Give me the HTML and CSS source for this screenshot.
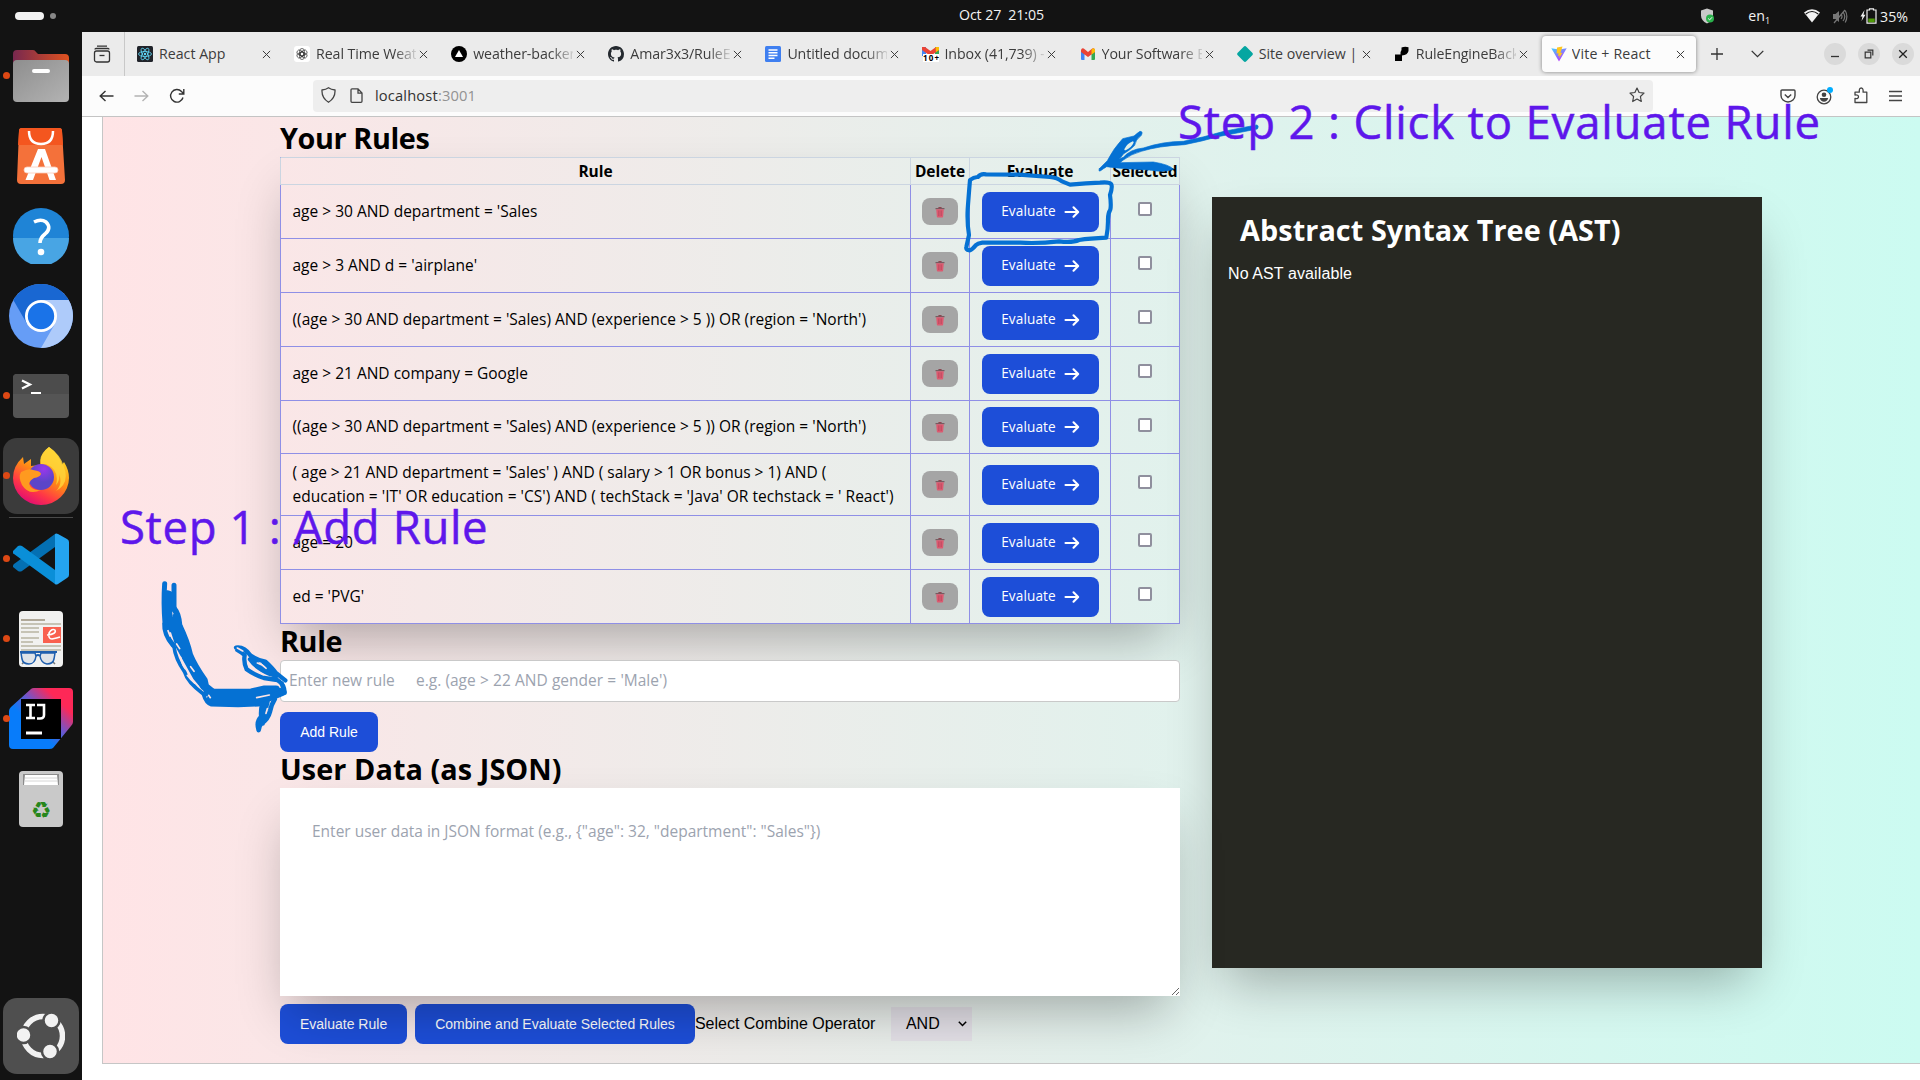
FILE: index.html
```html
<!DOCTYPE html>
<html lang="en">
<head>
<meta charset="utf-8">
<title>Vite + React</title>
<link rel="stylesheet" href="styles.css">
</head>
<body>
<svg class="defs" width="0" height="0">
  <symbol id="close" viewBox="0 0 10 10"><path d="M1 1l8 8M9 1l-8 8" stroke="#3c3c3c" stroke-width="1.1" fill="none"/></symbol>
  <symbol id="trash" viewBox="0 0 10 12"><path d="M.5 2.2h9v1h-9z" fill="#6b4a50"/><path d="M3.4 1h3.2v1.2H3.4z" fill="#8b4652"/><path d="M1.2 3.2h7.6l-.7 7.6q0 .7-.8.7H2.7q-.8 0-.8-.7z" fill="#dc5a70"/><path d="M3.5 4.5v5.5M5 4.5v5.5M6.500 4.500v5.500" stroke="#b5475c" stroke-width=".6"/></symbol>
  <symbol id="arrow" viewBox="0 0 16 14"><path d="M1.500 7h12.500M9.500 2.300L14.200 7 9.500 11.700" fill="none" stroke="#fff" stroke-width="2.100" stroke-linecap="round" stroke-linejoin="round"/></symbol>
</svg>

<header class="topbar">
  <div class="workspaces"><i class="pill"></i><i class="dot"></i></div>
  <div class="clock">Oct 27&nbsp; 21:05</div>
  <div class="tray">
    <svg class="t-shield" width="15" height="16" viewBox="0 0 15 16"><path d="M7 .5l6 2v5q0 5-6 8-6-3-6-8v-5z" fill="#c9c9c9"/><circle cx="10" cy="10.500" r="4" fill="#2bb24c"/><path d="M8.200 10.500l1.400 1.400 2.400-2.600" stroke="#fff" fill="none"/></svg>
    <span class="lang">en<sub>1</sub></span>
    <svg class="t-wifi" width="16" height="14" viewBox="0 0 16 14"><path d="M0 3.500Q8-3 16 3.500L8 13.500z" fill="#f2f2f2"/><path d="M1.800 5Q8 0 14.200 5" stroke="#131313" fill="none" stroke-width="1.200"/></svg>
    <svg class="t-mute" width="16" height="15" viewBox="0 0 16 15"><path d="M1 5h2.500L7 2v11L3.500 10H1z" fill="#777"/><path d="M9 5q2 2.500 0 5M11 3q3.500 4.500 0 9M13.200 1.500q3.300 6 0 12M2 14L13 1" stroke="#777" fill="none" stroke-width="1.200"/></svg>
    <svg class="t-bat" width="17" height="16" viewBox="0 0 17 16"><path d="M4.500 2L.5 8.500h2L1.500 13l4-6.300h-2z" fill="#f2f2f2"/><path d="M9.500 2V.8h4V2H16v13.200H7V2z" fill="none" stroke="#f2f2f2" stroke-width="1.200"/><path d="M8.300 10.500h6.400v3.700H8.300z" fill="#4e9a06"/></svg>
    <span class="pct">35%</span>
  </div>
</header>

<div class="desktop">
<nav class="dock">
  <div class="slot run"><svg width="56" height="54" viewBox="0 0 56 54"><defs><linearGradient id="fo"><stop offset="0" stop-color="#77284f"/><stop offset="1" stop-color="#e0521f"/></linearGradient><linearGradient id="fg" x2="1" y2="1"><stop offset="0" stop-color="#8e8e8e"/><stop offset="1" stop-color="#b3b3b3"/></linearGradient></defs><path d="M0 5q0-4 4-4h16q2 0 3 2l2 2h27q4 0 4 4v18H0z" fill="url(#fo)"/><rect y="11" width="56" height="42" rx="4" fill="url(#fg)"/><rect x="19" y="20" width="18" height="4" rx="2" fill="#fff"/></svg></div>
  <div class="slot"><svg width="50" height="58" viewBox="0 0 50 58"><path d="M6 1h37q3 0 3 3l3 49q0 4-4 4H5q-4 0-4-4L3 4q0-3 3-3z" fill="#f4713a"/><path d="M6 1h37q3 0 3 3l1 14H2L3 4q0-3 3-3z" fill="#f4561f"/><path d="M13 4q0 13 12 13T37 4" fill="none" stroke="#fff" stroke-width="2.500"/><path d="M22 22h7l11 31h-6.500l-8-23-8.500 23h-7.500z" fill="#fff"/><rect x="8" y="40" width="34" height="6" rx="3" fill="#fff" stroke="#fbcab8" stroke-width=".8"/></svg></div>
  <div class="slot"><svg width="56" height="56" viewBox="0 0 56 56"><circle cx="28" cy="28" r="28" fill="#1f84d6"/><path d="M0 30a28 28 0 0 0 56 0z" fill="#48a5e4"/><path d="M21 14q7-3.500 12 0 6 6-1 12-5 4-5 9" fill="none" stroke="#fff" stroke-width="3.600"/><circle cx="28" cy="44" r="3.300" fill="#fff"/></svg></div>
  <div class="slot"><svg width="64" height="64" viewBox="0 0 64 64"><circle cx="32" cy="32" r="32" fill="#669df6"/><path d="M4.300 16A32 32 0 0 1 59.700 16H32L18.100 40z" fill="#1967d2"/><path d="M59.700 16A32 32 0 0 1 32 64L45.900 40 32 16z" fill="#aecbfa"/><circle cx="32" cy="32" r="16" fill="#fff"/><circle cx="32" cy="32" r="13.200" fill="#1a73e8"/></svg></div>
  <div class="slot run"><svg width="56" height="44" viewBox="0 0 56 44"><rect width="56" height="44" rx="4" fill="#555"/><path d="M4 0h48q4 0 4 4v16H0V4q0-4 4-4z" fill="#4c4c4c"/><path d="M9 6.500l8 4-8 4" fill="none" stroke="#fff" stroke-width="2.200"/><path d="M18 19h10" stroke="#fff" stroke-width="2"/></svg></div>
  <div class="slot run active"><svg width="56" height="58" viewBox="0 0 56 58"><defs><linearGradient id="ff" x1=".8" y1=".1" x2=".3" y2="1"><stop offset="0" stop-color="#ffe226"/><stop offset=".45" stop-color="#ff8a16"/><stop offset=".75" stop-color="#ff3647"/><stop offset="1" stop-color="#e00b75"/></linearGradient><radialGradient id="fp" cx=".6" cy=".2"><stop offset="0" stop-color="#9a37ec"/><stop offset="1" stop-color="#5b45c8"/></radialGradient></defs><path d="M36 0q10 7 13 18l2-3q5 8 5 16a28 27 0 0 1-56 0q0-12 10-21l1 7 7-5v7q4-1 9 0 0-13 9-19z" fill="url(#ff)"/><circle cx="28" cy="30" r="13" fill="url(#fp)"/><path d="M8 25q8-4 12-2 8 1 8 4-1 3-7 4-4 2-5 6 3 7 12 6-12 6-19-5-4-8-1-13z" fill="#ff9a1f"/><path d="M33 17q14 6 10 21 4-4 3-11 4 10-3 17 14-8 8-24Q48 8 36 0q-11 8-8 17z" fill="#ffd43a" opacity=".85"/></svg></div>
  <hr class="dock-sep">
  <div class="slot run"><svg width="56" height="52" viewBox="0 0 56 52"><path d="M0 34l5 4q2 1 4 0L42 14V1L1 31q-2 2-1 3z" fill="#0470b3"/><path d="M0 18l5-5q2-1 4 0l33 24v14L1 21q-2-1-1-3z" fill="#0a8fd8"/><path d="M42 1q1-1 3 0l9 5q2 1 2 3v33q0 2-2 3l-9 6q-2 1-3 0z" fill="#24a4f0"/></svg></div>
  <div class="slot run"><svg width="44" height="56" viewBox="0 0 44 56"><rect width="44" height="56" rx="4" fill="#f1f1f0"/><path d="M2 9h24" stroke="#b0a898" stroke-width="2"/><path d="M2 13h40M2 17h18M2 21h18M2 27h18M2 31h12M2 35h40M2 39h40" stroke="#c6c3b5" stroke-width="2"/><rect x="24" y="16" width="18" height="16" fill="#f9604f"/><path d="M28 24q10-1 8-5-3-2-6 3-1 6 3 6 5-1 8-2" fill="none" stroke="#fff" stroke-width="1.500"/><path d="M3 53l11-11M36 53L25 42" stroke="#777" stroke-width="1.500"/><path d="M2 42h14l1 3q-1 8-7 8-6 0-7-5zM22 42h14l-1 6q-1 5-7 5-6-1-7-8z" fill="#dfe3e8" stroke="#1f5fae" stroke-width="1.500"/><path d="M1 41h37M17 45q2-2 4 0" fill="none" stroke="#1f5fae" stroke-width="1.800"/></svg></div>
  <div class="slot run"><svg width="64" height="64" viewBox="0 0 64 64"><defs><linearGradient id="ij" x1=".15" y1=".85" x2=".9" y2=".1"><stop offset=".3" stop-color="#087cfa"/><stop offset=".55" stop-color="#6b57ce"/><stop offset=".85" stop-color="#fe2857"/></linearGradient></defs><path d="M22 2q1-1 3-1h35q4 0 4 4v30q0 2-2 4L44 61q-1 1-4 1H4q-4 0-4-4V24q0-2 2-4z" fill="url(#ij)"/><rect x="12" y="12" width="40" height="40" fill="#000"/><path d="M17 18h9M21.500 18v13M17 31h9M28 18h7v10q0 3.500-4 3.500h-3" fill="none" stroke="#fff" stroke-width="2.600"/><path d="M17 46h16" stroke="#fff" stroke-width="3"/></svg></div>
  <div class="slot"><svg width="44" height="56" viewBox="0 0 44 56"><rect width="44" height="56" rx="4" fill="#c9c9c9"/><path d="M4 3h36v11H4z" fill="#8c8c8c"/><path d="M6 4h32l1 10H5z" fill="#fff"/><path d="M6 7h32M6 10h33" stroke="#ccc" stroke-width=".8"/></svg><span class="recycle">♻</span></div>
  <div class="slot launcher"><svg width="48" height="46" viewBox="0 0 48 46"><circle cx="26" cy="23" r="19.500" fill="none" stroke="#f2f2f2" stroke-width="5.500"/><g fill="#f2f2f2" stroke="#4f4f4f" stroke-width="2.500"><circle cx="6.500" cy="22" r="8"/><circle cx="34.500" cy="7.500" r="8"/><circle cx="33" cy="38.500" r="8"/></g></svg></div>
</nav>

<main class="window">
  <div class="tabstrip">
    <div class="tabview"><svg width="18" height="18" viewBox="0 0 18 18" fill="none" stroke="#333" stroke-width="1.300"><path d="M4 1.200h10M2 4.500q0-1 1-1h12q1 0 1 1"/><rect x="1.500" y="6" width="15" height="11" rx="2"/><path d="M6.500 10.500h5"/></svg></div>
    <div class="tabs">
      <div class="tab"><svg width="16" height="16" viewBox="0 0 16 16"><rect width="16" height="16" rx="1.500" fill="#20232a"/><g fill="none" stroke="#61dafb" stroke-width=".8"><ellipse cx="8" cy="8" rx="6.500" ry="2.500"/><ellipse cx="8" cy="8" rx="6.500" ry="2.500" transform="rotate(60 8 8)"/><ellipse cx="8" cy="8" rx="6.500" ry="2.500" transform="rotate(120 8 8)"/></g><circle cx="8" cy="8" r="1.200" fill="#61dafb"/></svg><span class="label">React App</span><svg class="x"><use href="#close"/></svg></div>
      <div class="tab"><svg width="16" height="16" viewBox="0 0 16 16"><rect width="16" height="16" rx="3" fill="#fff"/><g fill="none" stroke="#333" stroke-width=".7"><rect x="5.700" y="2.500" width="4.600" height="7.500" rx="2.300"/><rect x="5.700" y="2.500" width="4.600" height="7.500" rx="2.300" transform="rotate(60 8 8)"/><rect x="5.700" y="2.500" width="4.600" height="7.500" rx="2.300" transform="rotate(120 8 8)"/><rect x="5.700" y="2.500" width="4.600" height="7.500" rx="2.300" transform="rotate(180 8 8)"/><rect x="5.700" y="2.500" width="4.600" height="7.500" rx="2.300" transform="rotate(240 8 8)"/><rect x="5.700" y="2.500" width="4.600" height="7.500" rx="2.300" transform="rotate(300 8 8)"/></g></svg><span class="label fade">Real Time Weat</span><svg class="x"><use href="#close"/></svg></div>
      <div class="tab"><svg width="16" height="16" viewBox="0 0 16 16"><circle cx="8" cy="8" r="8"/><path d="M8 4l4 7H4z" fill="#fff"/></svg><span class="label fade">weather-backen</span><svg class="x"><use href="#close"/></svg></div>
      <div class="tab"><svg width="16" height="16" viewBox="0 0 16 16"><path fill="#24292f" d="M8 0C3.580 0 0 3.580 0 8c0 3.540 2.290 6.530 5.470 7.590.4.070.55-.17.55-.38 0-.19-.01-.82-.01-1.490-2.010.37-2.530-.49-2.690-.94-.09-.23-.48-.94-.82-1.130-.28-.15-.68-.52-.01-.53.63-.01 1.080.58 1.230.82.72 1.210 1.870.87 2.330.66.07-.52.28-.87.51-1.070-1.780-.2-3.640-.89-3.640-3.950 0-.87.31-1.590.82-2.150-.08-.2-.36-1.020.08-2.120 0 0 .67-.21 2.200.82.64-.18 1.320-.27 2-.27s1.360.09 2 .27c1.530-1.040 2.200-.82 2.200-.82.44 1.100.16 1.920.08 2.120.51.56.82 1.270.82 2.150 0 3.070-1.870 3.750-3.650 3.950.29.25.54.73.54 1.480 0 1.070-.01 1.930-.01 2.200 0 .21.15.46.55.38A8.010 8.010 0 0 0 16 8c0-4.420-3.580-8-8-8z"/></svg><span class="label fade">Amar3x3/RuleE</span><svg class="x"><use href="#close"/></svg></div>
      <div class="tab"><svg width="16" height="16" viewBox="0 0 16 16"><rect width="16" height="16" rx="1.500" fill="#3f7ff0"/><path d="M3.500 4h9M3.500 6.800h9M3.500 9.500h9M3.500 12.200h6" stroke="#fff" stroke-width="1.400"/></svg><span class="label fade">Untitled docum</span><svg class="x"><use href="#close"/></svg></div>
      <div class="tab"><svg width="17" height="16" viewBox="0 0 17 16"><path d="M0 1h4v9H0z" fill="#4285f4"/><path d="M13 1h4v9h-4z" fill="#34a853"/><path d="M0 1h3l5.500 4L14 1h3v3L8.500 10 0 4z" fill="#ea4335"/><path d="M13.500 1H17v3l-3 2z" fill="#fbbc04"/><rect x="1" y="8" width="16" height="8" fill="#fff"/><text x="1" y="15.200" font-family="Open Sans,sans-serif" font-size="8" font-weight="700" textLength="16">10+</text></svg><span class="label fade inbox">Inbox (41,739) -</span><svg class="x"><use href="#close"/></svg></div>
      <div class="tab"><svg width="16" height="16" viewBox="0 0 16 16"><path d="M1 4h3.500v10H2q-1 0-1-1z" fill="#4285f4"/><path d="M11.500 4H15v9q0 1-1 1h-2.500z" fill="#34a853"/><path d="M1 4q1-3 4-.5L8 6l3-2.500Q14 1 15 4v2L8 11 1 6z" fill="#ea4335"/><path d="M11.500 3.500Q14.500 1 15 4v2l-3.500 2.600z" fill="#fbbc04"/></svg><span class="label fade">Your Software E</span><svg class="x"><use href="#close"/></svg></div>
      <div class="tab"><svg width="16" height="16" viewBox="0 0 16 16"><path d="M8 0q.7 0 1.300.7l6.200 6.300q.7 1 0 2l-6.200 6.300Q8 16.500 6.700 15.300L.5 9q-.7-1 0-2L6.700.7Q7.300 0 8 0z" fill="#05a6a1"/></svg><span class="label">Site overview |</span><svg class="x"><use href="#close"/></svg></div>
      <div class="tab"><svg width="16" height="16" viewBox="0 0 16 16"><path d="M1 8.500h5.500Q6 6 7.500 4V1.500Q11 0 14.500 1.200V5q-1 4-6.500 4.500V15H1z"/></svg><span class="label fade">RuleEngineBack</span><svg class="x"><use href="#close"/></svg></div>
      <div class="tab current"><svg width="16" height="16" viewBox="0 0 16 16"><defs><linearGradient id="vt" x2=".6" y2="1"><stop offset="0" stop-color="#41d1ff"/><stop offset="1" stop-color="#bd34fe"/></linearGradient></defs><path d="M.3 2.200L8 15.600 15.700 2.200 8 3.600z" fill="url(#vt)"/><path d="M11.500.5L6 1.600l-.4 6 2-.4-.6 2.800 1.800-.6-.8 3 3.400-5.600-2 .3z" fill="#ffc61e"/></svg><span class="label">Vite + React</span><svg class="x"><use href="#close"/></svg></div>
    </div>
    <div class="tabtools">
      <svg width="12" height="12" viewBox="0 0 12 12"><path d="M6 0v12M0 6h12" stroke="#333" stroke-width="1.300"/></svg>
      <svg class="all" width="13" height="8" viewBox="0 0 13 8"><path d="M.7.9l5.800 5.800L12.300.9" fill="none" stroke="#333" stroke-width="1.300"/></svg>
    </div>
    <div class="wm">
      <i><svg width="10" height="10" viewBox="0 0 10 10"><path d="M1 7.500h8" stroke="#333" stroke-width="1.300"/></svg></i>
      <i><svg width="10" height="10" viewBox="0 0 10 10" fill="none" stroke="#333" stroke-width="1.200"><path d="M1.200 3.200h5.600v5.600H1.200zM3.500 1.200h5.300v5.300"/></svg></i>
      <i><svg width="10" height="10" viewBox="0 0 10 10"><path d="M1.200 1.200l7.600 7.600M8.800 1.200L1.200 8.800" stroke="#222" stroke-width="1.300"/></svg></i>
    </div>
  </div>

  <div class="toolbar">
    <div class="nav">
      <svg width="15" height="12" viewBox="0 0 15 12"><path d="M14.500 6H1.500M6.500 1L1.200 6l5.300 5" fill="none" stroke="#333" stroke-width="1.400"/></svg>
      <svg width="15" height="12" viewBox="0 0 15 12"><path d="M.5 6h13M8.500 1l5.300 5-5.300 5" fill="none" stroke="#b3b3b3" stroke-width="1.400"/></svg>
      <svg width="16" height="16" viewBox="0 0 16 16"><path d="M14 9.500A6.300 6.300 0 1 1 12.500 3.500L14.500 5.500M14.800 1v5h-5" fill="none" stroke="#333" stroke-width="1.400"/></svg>
    </div>
    <div class="url">
      <svg width="15" height="16" viewBox="0 0 15 16"><path d="M7.500.8Q10 2.700 14 3q.5 8-6.500 12.200Q.5 11 1 3q4-.3 6.500-2.200z" fill="none" stroke="#444" stroke-width="1.300"/></svg>
      <svg width="13" height="15" viewBox="0 0 13 15"><path d="M8 .8H2q-1 0-1 1v11.500q0 1 1 1h9q1 0 1-1V5zv4.400h4" fill="none" stroke="#444" stroke-width="1.300"/></svg>
      <span class="addr">localhost<b>:3001</b></span>
      <svg class="star" width="16" height="16" viewBox="0 0 16 16"><path d="M8 1l2.100 4.500 4.900.6-3.600 3.400.9 5L8 12l-4.300 2.500.9-5L1 6.100l4.900-.6z" fill="none" stroke="#444" stroke-width="1.200" stroke-linejoin="round"/></svg>
    </div>
    <div class="ext">
      <svg width="16" height="16" viewBox="0 0 16 16" fill="none" stroke="#444" stroke-width="1.400"><path d="M1 3q0-1 1-1h12q1 0 1 1v4.500a7 6.500 0 0 1-14 0zM4.800 6.500L8 9.500l3.200-3"/></svg>
      <svg width="17" height="18" viewBox="0 0 17 18"><circle cx="8" cy="10" r="6.800" fill="none" stroke="#444" stroke-width="1.300"/><circle cx="8" cy="7.800" r="2.300" fill="#444"/><path d="M3.800 11h8.400q-1 3.800-4.200 3.800T3.800 11z" fill="#444"/><circle cx="14" cy="3" r="3" fill="#00adff"/></svg>
      <svg width="16" height="17" viewBox="0 0 16 17"><path d="M2 15.500v-4q3.500.5 3.500-1.700T2 8V5.200h4.300V3q.2-2 1.900-2t1.900 2v2.200h3.700v10.300z" fill="none" stroke="#444" stroke-width="1.300" stroke-linejoin="round"/></svg>
      <svg width="13" height="12" viewBox="0 0 13 12"><path d="M0 1.500h13M0 6h13M0 10.500h13" stroke="#444" stroke-width="1.300"/></svg>
    </div>
  </div>

  <div class="viewport">
    <div class="app">
      <section class="left">
        <h2>Your Rules</h2>
        <div class="rules">
          <div class="row head"><div>Rule</div><div>Delete</div><div>Evaluate</div><div>Selected</div></div>
          <div class="row"><div>age &gt; 30 AND department = 'Sales</div><div><button class="del"><svg><use href="#trash"/></svg></button></div><div><button class="ev">Evaluate<svg><use href="#arrow"/></svg></button></div><div><i class="cb"></i></div></div>
          <div class="row"><div>age &gt; 3 AND d = 'airplane'</div><div><button class="del"><svg><use href="#trash"/></svg></button></div><div><button class="ev">Evaluate<svg><use href="#arrow"/></svg></button></div><div><i class="cb"></i></div></div>
          <div class="row"><div>((age &gt; 30 AND department = 'Sales) AND (experience &gt; 5 )) OR (region = 'North')</div><div><button class="del"><svg><use href="#trash"/></svg></button></div><div><button class="ev">Evaluate<svg><use href="#arrow"/></svg></button></div><div><i class="cb"></i></div></div>
          <div class="row"><div>age &gt; 21 AND company = Google</div><div><button class="del"><svg><use href="#trash"/></svg></button></div><div><button class="ev">Evaluate<svg><use href="#arrow"/></svg></button></div><div><i class="cb"></i></div></div>
          <div class="row short"><div>((age &gt; 30 AND department = 'Sales) AND (experience &gt; 5 )) OR (region = 'North')</div><div><button class="del"><svg><use href="#trash"/></svg></button></div><div><button class="ev">Evaluate<svg><use href="#arrow"/></svg></button></div><div><i class="cb"></i></div></div>
          <div class="row tall"><div><span>( age &gt; 21 AND department = 'Sales' ) AND ( salary &gt; 1 OR bonus &gt; 1) AND (<br><span class="second">education = 'IT' OR education = 'CS') AND ( techStack = 'Java' OR techstack = ' React')</span></span></div><div><button class="del"><svg><use href="#trash"/></svg></button></div><div><button class="ev">Evaluate<svg><use href="#arrow"/></svg></button></div><div><i class="cb"></i></div></div>
          <div class="row"><div>age = 20</div><div><button class="del"><svg><use href="#trash"/></svg></button></div><div><button class="ev">Evaluate<svg><use href="#arrow"/></svg></button></div><div><i class="cb"></i></div></div>
          <div class="row"><div>ed = 'PVG'</div><div><button class="del"><svg><use href="#trash"/></svg></button></div><div><button class="ev">Evaluate<svg><use href="#arrow"/></svg></button></div><div><i class="cb"></i></div></div>
        </div>
        <h2>Rule</h2>
        <input class="rule-input" placeholder="Enter new rule     e.g. (age &gt; 22 AND gender = 'Male')">
        <button class="btn add">Add Rule</button>
        <h2 class="wide">User Data (as JSON)</h2>
        <textarea class="json" placeholder="Enter user data in JSON format (e.g., {&quot;age&quot;: 32, &quot;department&quot;: &quot;Sales&quot;})"></textarea>
        <div class="actions">
          <button class="btn">Evaluate Rule</button>
          <button class="btn">Combine and Evaluate Selected Rules</button>
          <label>Select Combine Operator</label>
          <div class="select">AND<svg width="9" height="6" viewBox="0 0 9 6"><path d="M.8.800l3.700 3.700L8.200.8" fill="none" stroke="#000" stroke-width="1.500"/></svg></div>
        </div>
      </section>
      <section class="ast">
        <h2 class="wide">Abstract Syntax Tree (AST)</h2>
        <p>No AST available</p>
      </section>
    </div>
  </div>
</main>
</div>

<div class="note step1">Step 1 : Add Rule</div>
<div class="note step2">Step 2 : Click to Evaluate Rule</div>
<svg class="ink" width="1920" height="1080" viewBox="0 0 1920 1080" fill="none" stroke="#0571d3" stroke-linecap="round" stroke-linejoin="round">
  <g transform="translate(150 570) scale(.33333)">
    <g stroke-width="13">
      <path d="M44 41q-4 56 1 118M72 46v70M58 70v110M44 160q-2 34 26 66" stroke-width="15"/>
      <path d="M52 70L60 150 98 240 160 350M72 116q14 16 16 50 24 50 32 88 14 34 44 76l4 18 30 24" stroke-width="18"/>
      <path d="M62 150l26 80 50 90 42 50M78 140l30 100 46 90" stroke-width="21"/>
      <path d="M46 170q2 30 26 60 4 36 32 76 8 30 56 66 8 28 24 32l80 2 62-2" stroke-width="11"/>
      <path d="M172 368h42l90-1 40-9h34M180 390l84 6 80-8 54-22M200 380l130 0 60-14" stroke-width="23"/>
      <path d="M258 233q24-4 44 24 22 14 44 18 20 18 30 32l30 24M262 240q16 10 22 16-4 20 6 42 18 14 52 26l40 6q22 14 22 38M312 272q24 28 60 44M300 268q18 26 60 44M340 276l40 42" stroke-width="13"/>
      <path d="M336 402q-4 26-2 38-16 14-8 40 2-14 8-20 20-12 26-36 4-20 14-36M346 400l-8 60M352 396l-10 40" stroke-width="14"/>
      <path d="M396 340l6 24-34 10" stroke-width="12"/>
    </g>
    <path stroke="#fbe4e5" stroke-width="5" d="M54 182l6 16M80 222l9 14M92 262q5 24 14 34M122 290l10 14M112 316q10 14 22 23M176 376l5 7M262 234l16 9M322 279q16 4 26 16M298 288q20 14 42 26M320 383l38-8M352 416l-4 14"/>
  </g>
  <g transform="translate(960 120) scale(.33333)">
    <path stroke-width="12.500" d="M30 180q12-10 24-9 8-11 24-8l100 1 92 7q22 2 36 13l24 10q50-4 90-6 28-3 34 5 4 8-4 32 4 30 1 44-8 12-7 34 0 24-5 50-50 2-82 7-20 9-60 4-60 7-116 4-60 0-114 0-14 2-20 8-12 15-20 15-10-2-8-10l8-36q-6-36-4-76 2-30 7-89z"/>
    <path fill="#0571d3" stroke-width="2" d="M418 146l24-24q18-36 46-66l34-8q12-10 18-14 10 0 4 12-18 14-20 30-10 12-34 26-8 14-20 18l20-8q20-24 60-28 60-20 120-20 60-12 122-30 60-12 98-19 8 2 2 12-60 12-118 23-48 14-100 24-80 4-130 20-30 8-54 26l-10 8 100-2q50 8 60 22-30 10-70 2-90-4-130-10-10 6-18 12-8 4-4-6z"/>
    <path stroke="#e0efea" stroke-width="6" d="M496 88q8-16 22-21-6 14-22 21z"/>
  </g>
</svg>
</body>
</html>
```
FILE: styles.css
```css
* { box-sizing: border-box; }
body { margin: 0; width: 1920px; height: 1080px; overflow: hidden; position: relative; display: flex; flex-direction: column; background: #fff; font-family: "Open Sans", "Noto Sans", sans-serif; font-size: 15.5px; color: #000; }
svg { display: block; flex: none; }
i { font-style: normal; }
.defs { position: absolute; }
h2 { margin: 0; font-size: 28.8px; font-weight: 700; line-height: 34px; height: 36px; letter-spacing: -.4px; white-space: nowrap; }
.wide { letter-spacing: .08px; }

.topbar { height: 32px; flex: none; background: #131313; color: #f2f2f2; font-size: 14.2px; display: grid; grid-template-columns: 1fr auto 1fr; align-items: center; }
.workspaces { display: flex; align-items: center; gap: 6px; padding-left: 15px; }
.pill { width: 29px; height: 8px; border-radius: 4px; background: #f2f2f2; }
.dot { width: 6px; height: 6px; border-radius: 3px; background: #888; }
.clock { letter-spacing: -.1px; padding-left: 83px; line-height: 30px; padding-bottom: 2px; }
.tray { display: flex; align-items: center; justify-content: flex-end; padding-right: 12px; }
.t-shield { margin-right: 33px; }
.lang { margin-right: 34px; line-height: 20px; }
.lang sub { font-size: 9px; line-height: 0; vertical-align: -3px; }
.t-wifi { margin-right: 12px; }
.t-mute { margin-right: 12px; }
.t-bat { margin-right: 3px; }

.desktop { flex: 1; display: flex; min-height: 0; }
.dock { width: 82px; flex: none; background: #131313; padding-top: 4px; display: flex; flex-direction: column; }
.slot { height: 80px; flex: none; display: flex; align-items: center; justify-content: center; position: relative; }
.run::before { content: ""; position: absolute; left: 3px; top: 36px; width: 7px; height: 7px; border-radius: 50%; background: #dd4814; }
.active { height: 76px; margin: 2px 3px; border-radius: 14px; background: #3b3b3b; }
.active::before { left: 0; top: 34px; }
.active svg { margin-bottom: 1px; }
.dock-sep { width: 64px; height: 1px; margin: 1px auto 1px; border: 0; background: #4a4a4a; }
.recycle { position: absolute; top: 40px; font: 23px/22px "DejaVu Sans", sans-serif; color: #26861b; }
.launcher { height: 76px; margin: auto 3px 6px; border-radius: 14px; background: #4f4f4f; }

.window { flex: 1; min-width: 0; display: flex; flex-direction: column; background: #fff; }
.tabstrip { height: 44px; flex: none; background: #ebebeb; display: flex; align-items: center; font-size: 14.2px; color: #3c3c3c; }
.tabview { width: 43px; height: 44px; border-right: 1px solid #c8c8c8; display: flex; align-items: center; justify-content: center; padding-right: 2px; }
.tabs { display: flex; padding-left: 4px; }
.tab { width: 157.100px; height: 44px; padding-left: 8px; display: flex; align-items: center; }
.label { margin-left: 6px; width: 100px; line-height: 20px; white-space: nowrap; overflow: hidden; }
.fade { letter-spacing: -.1px; -webkit-mask-image: linear-gradient(to right, #000 78px, transparent 104px); mask-image: linear-gradient(to right, #000 78px, transparent 104px); }
.inbox { margin-left: 5px; }
.x { width: 9px; height: 9px; margin-left: 3px; }
.current { height: 36px; margin: 4px 0; margin-left: -1px; width: 154px; padding-left: 9px; border-radius: 4px; background: #fcfcfc; box-shadow: 0 0 4px rgba(0,0,0,.45); }
.current .label { letter-spacing: .15px; margin-left: 5px; }
.current .x { margin-left: 4px; }
.tabtools { display: flex; align-items: center; gap: 28px; margin-left: 15px; }
.wm { margin: 0 6px 0 auto; display: flex; gap: 12px; }
.wm i { width: 22px; height: 22px; border-radius: 50%; background: #dadada; display: flex; align-items: center; justify-content: center; }

.toolbar { height: 41px; flex: none; background: #fcfcfc; border-bottom: 1px solid #c4c4c4; display: flex; align-items: center; }
.nav { width: 231px; padding-left: 17px; display: flex; align-items: center; gap: 20px; }
.url { width: 1340px; height: 32px; border-radius: 4px; background: #eee; display: flex; align-items: center; padding: 0 8px 2px; gap: 14px; font-size: 14.7px; color: #333; }
.url span { margin-left: -2px; letter-spacing: .15px; }
.addr b { font-weight: 400; color: #929292; }
.star { margin-left: auto; }
.ext { display: flex; align-items: center; gap: 20px; margin-left: 127px; padding-bottom: 1px; }

.viewport { flex: 1; min-height: 0; padding-left: 20px; }
.app { height: 947px; border: 1px solid #c6c6c6; border-top: 0; border-right: 0; background: linear-gradient(to right, #ffe4e6, #ccfbf1); display: flex; padding: 4px 0 0 177px; overflow: hidden; }
.left { width: 900px; flex: none; }
.rules { width: 900px; border-left: 1px solid #8f8fe6; border-top: 1px solid #cbd5e1; box-shadow: 0 25px 50px -12px rgba(0,0,0,.3); }
.row { display: grid; grid-template-columns: 630px 59px 141px 69px; height: 54px; line-height: 24px; }
.row > div { border-right: 1px solid #8f8fe6; border-bottom: 1px solid #8f8fe6; display: flex; align-items: center; justify-content: center; white-space: nowrap; }
.row > div:first-child { justify-content: flex-start; padding: 0 0 2px 11.5px; }
.row > div:last-child { padding-bottom: 5px; }
.second { letter-spacing: .03px; }
.head { height: 27px; font-weight: 700; margin-left: -1px; grid-template-columns: 631px 59px 141px 69px; letter-spacing: -.05px; }
.head > div, .head > div:first-child, .head > div:last-child { justify-content: center; padding: 0; border-color: #cbd5e1; }
.head > div:first-child { border-left: 1px solid #cbd5e1; }
.short { height: 53px; }
.tall { height: 62px; }
button { border: 0; margin: 0; padding: 0; font-family: inherit; }
.del { width: 36px; height: 27px; border-radius: 8px; background: #a5a5a5; display: flex; align-items: center; justify-content: center; }
.del svg { width: 10px; height: 12px; }
.ev { width: 117px; height: 40px; border-radius: 8px; background: #1d4ed8; color: #fff; font-size: 13.6px; letter-spacing: .12px; display: flex; align-items: center; justify-content: center; gap: 8px; padding: 0 0 2px 1px; }
.ev svg { width: 16px; height: 14px; margin-top: 2px; }
.cb { width: 14px; height: 14px; border: 2px solid #8f8f9d; border-radius: 2px; background: #fff; }

input, textarea { display: block; margin: 0; outline: 0; font: 15.5px/24px "Open Sans", "Noto Sans", sans-serif; background: #fff; position: relative; }
::placeholder { color: #9ca3af; opacity: 1; }
.rule-input { width: 900px; height: 42px; border: 1px solid #c9c9c9; border-radius: 4px; padding: 0 8px 2px; word-spacing: .2px; }
.btn { height: 40px; border-radius: 8px; background: #1d4ed8; color: #fff; font: 14px "Liberation Sans", Arial, sans-serif; padding: 0 20px; white-space: nowrap; }
.add { display: block; margin-top: 10px; width: 98px; }
.json { width: 900px; height: 208px; border: 0; padding: 31px 32px; resize: both; box-shadow: 0 25px 50px -12px rgba(0,0,0,.3); z-index: 1; }
.actions { display: flex; align-items: center; margin-top: 8px; font: 16px "Liberation Sans", Arial, sans-serif; }
.actions .btn + .btn { margin-left: 8px; }
.select { margin-left: 16px; width: 81px; height: 34px; background: #e3e0e7; display: flex; align-items: center; justify-content: space-between; padding: 0 5px 0 14.5px; }

.ast { margin: 76px 0 0 32px; width: 550px; height: 771px; background: #272822; color: #fff; padding: 16px; box-shadow: 0 25px 50px -12px rgba(0,0,0,.3); }
.ast h2 { padding-left: 12px; }
.ast p { margin: 13px 0 0; font: 16px/24px "Liberation Sans", Arial, sans-serif; letter-spacing: .1px; }

.note { position: absolute; font-size: 45.5px; line-height: 60px; color: #5e17eb; -webkit-text-stroke: .5px #5e17eb; white-space: nowrap; }
.step1 { left: 120px; top: 496px; letter-spacing: .65px; }
.step2 { left: 1178px; top: 91px; letter-spacing: .83px; z-index: 2; }
.ink { position: absolute; left: 0; top: 0; pointer-events: none; }
```
